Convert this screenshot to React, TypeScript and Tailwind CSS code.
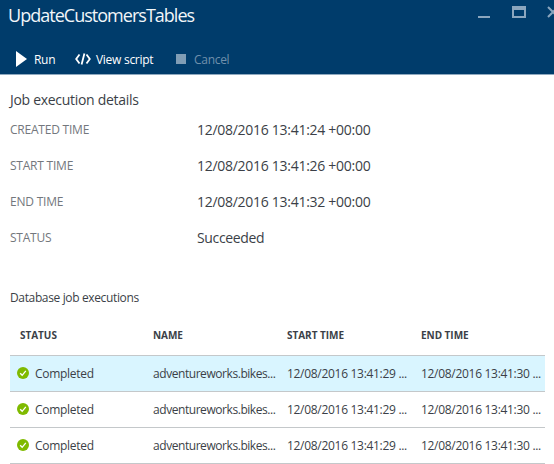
const details = [
  { label: "CREATED TIME", value: "12/08/2016 13:41:24 +00:00", track: "tracking-[-0.28px]" },
  { label: "START TIME", value: "12/08/2016 13:41:26 +00:00", track: "tracking-[-0.28px]" },
  { label: "END TIME", value: "12/08/2016 13:41:32 +00:00", track: "tracking-[-0.28px]" },
  { label: "STATUS", value: "Succeeded", track: "tracking-[-0.35px]" },
];

const executions = [
  { id: 1, selected: true },
  { id: 2, selected: false },
  { id: 3, selected: false },
];

function CheckIcon() {
  return (
    <svg width="12" height="12" viewBox="0 0 12 12" className="mr-[6px] mb-[2px] shrink-0">
      <circle cx="6" cy="6" r="6" fill="#7fba00" />
      <path d="M3.2 6.2 5.2 8.3 8.8 3.9" fill="none" stroke="#fff" strokeWidth="1.3" />
    </svg>
  );
}

function Header() {
  return (
    <header className="flex h-[75px] flex-col border-b border-[#8fa9bf] bg-[#003c6b]">
      <div className="flex h-[37px] justify-between overflow-hidden">
        <h1 className="pl-[8px] text-[18px] leading-[30px] tracking-[-0.98px] text-[#f2f6f9]">UpdateCustomersTables</h1>
        <div className="-mr-[5px] flex shrink-0 text-[#8ba6be]">
          <span className="mt-[16px] mr-[22px] h-[2px] w-[12px] bg-[#8ba6be]" />
          <span className="mt-[6px] mr-[21px] h-[12px] w-[14px] border-2 border-t-4 border-[#8ba6be]" />
          <svg width="12" height="12" viewBox="0 0 12 12" className="mt-[6px]">
            <path d="M1 1 11 11M11 1 1 11" stroke="currentColor" strokeWidth="2" />
          </svg>
        </div>
      </div>
      <nav className="flex h-[37px] items-center pt-[7px] text-[12px] text-white">
        <svg width="11" height="16" viewBox="0 0 11 16" className="ml-[16px]">
          <path d="M0 0 11 8 0 16Z" fill="#fff" />
        </svg>
        <span className="ml-[7px] w-[41px] pt-[2px] tracking-[-0.3px]">Run</span>
        <svg width="16" height="12" viewBox="0 0 16 12" fill="none" stroke="#fff" strokeWidth="1.8">
          <path d="M4.5 1.5 1.2 6 4.5 10.5M11.5 1.5 14.8 6 11.5 10.5M9.4 0.5 6.6 11.5" />
        </svg>
        <span className="ml-[5px] w-[80px] pt-[2px] whitespace-nowrap tracking-[-0.28px]">View script</span>
        <span className="h-[10px] w-[10px] bg-[#809db5]" />
        <span className="ml-[8px] pt-[2px] tracking-[-0.3px] text-[#7090ab]">Cancel</span>
      </nav>
    </header>
  );
}

export default function App() {
  return (
    <div className="h-[464px] w-[554px] overflow-hidden bg-white font-['Open_Sans','Noto_Sans',sans-serif] text-[#3b3f47]">
      <Header />
      <section className="pl-[10px] pt-[15px]">
        <h2 className="h-[22px] text-[14px] leading-[20px] tracking-[-0.3px]">Job execution details</h2>
        <dl>
          {details.map((d) => (
            <div key={d.label} className="flex h-[36px] leading-[36px]">
              <dt className="w-[187px] text-[12px] tracking-[-0.22px] text-[#73777d]">{d.label}</dt>
              <dd className={"text-[14px] " + d.track}>{d.value}</dd>
            </div>
          ))}
        </dl>
      </section>
      <section className="pl-[10px] pr-[9px] pt-[32px]">
        <h2 className="h-[20px] text-[12px] leading-[20px] tracking-[-0.36px]">Database job executions</h2>
        <div className="mt-[7px] grid h-[41px] grid-cols-[133px_134px_134px_134px] border-b border-[#c4c8ca] pl-[10px] text-[10px] font-bold leading-[40px] tracking-[-0.03px]">
          <span>STATUS</span>
          <span>NAME</span>
          <span>START TIME</span>
          <span>END TIME</span>
        </div>
        {executions.map((row) => (
          <div
            key={row.id}
            className={
              "grid h-[36px] grid-cols-[136px_134px_134px_124px] border-b border-[#c4c8ca] pl-[7px] text-[12px] leading-[36px] whitespace-nowrap " +
              (row.selected ? "bg-[#d9f5ff]" : "bg-white")
            }
          >
            <span className="flex items-center tracking-[-0.28px]">
              <CheckIcon />
              Completed
            </span>
            <span className="tracking-[-0.44px]">adventureworks.bikes...</span>
            <span className="tracking-[-0.3px]">12/08/2016 13:41:29 ...</span>
            <span className="tracking-[-0.3px]">12/08/2016 13:41:30 ...</span>
          </div>
        ))}
      </section>
    </div>
  );
}
